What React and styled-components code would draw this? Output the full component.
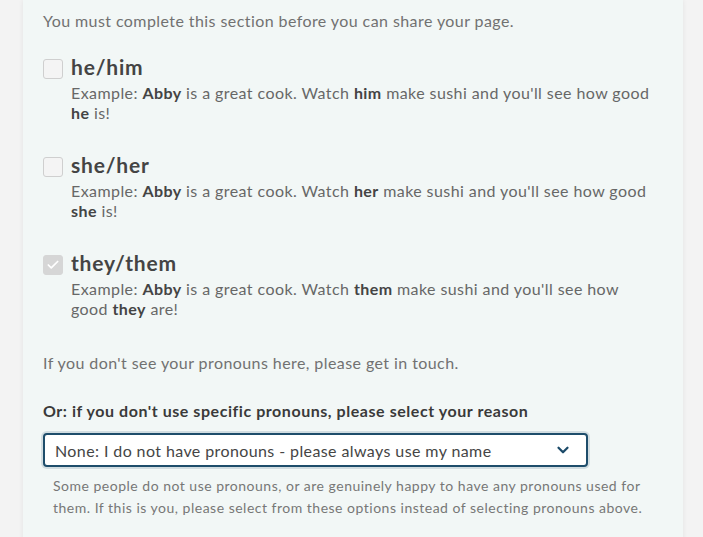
import React from 'react';
import styled, { createGlobalStyle } from 'styled-components';
import { ChevronDown, Check } from 'lucide-react';

const GlobalStyle = createGlobalStyle`
body{
  margin:0;
  background:#f3f3f3;
  font-family:Lato, "Liberation Sans", sans-serif;
}
`

const Panel = styled.section`
width:660px;
margin-left:23px;
box-sizing:border-box;
background:#f2f7f6;
box-shadow:0 0 5px rgba(0,0,0,0.07);
padding:10px 20px 40px;
min-height:537px;
`

const Intro = styled.p`
margin:0;
font-size:16px;
line-height:22px;
letter-spacing:0.42px;
color:#717171;
`

const Options = styled.div`
margin-top:22px;
display:flex;
flex-direction:column;
gap:29px;
`

const Option = styled.label`
display:flex;
gap:8px;
`

const Box = styled.span`
flex:none;
width:20px;
height:20px;
margin-top:5px;
box-sizing:border-box;
border-radius:3px;
border:1px solid ${p => p.checked ? '#d6d6d6' : '#cfcfcf'};
background:${p => p.checked ? '#d6d6d6' : '#f4f4f4'};
display:flex;
align-items:center;
justify-content:center;
color:#fff;
`

const Body = styled.div`
flex:1;
max-width:584px;
`

const Title = styled.div`
font-size:21px;
line-height:26px;
font-weight:700;
letter-spacing:0.8px;
color:#444;
`

const Example = styled.div`
margin-top:3px;
font-size:16px;
line-height:20px;
letter-spacing:0.42px;
color:#676767;
b{
  color:#444;
  font-weight:700;
}
`

const Note = styled.p`
margin:33px 0 0;
font-size:16px;
line-height:22px;
letter-spacing:0.42px;
color:#717171;
`

const FieldLabel = styled.div`
margin-top:26px;
font-size:16px;
line-height:22px;
font-weight:700;
letter-spacing:0.55px;
color:#3a3a3a;
`

const SelectBox = styled.div`
margin-top:11px;
width:545px;
height:34px;
box-sizing:border-box;
border:2px solid #1e4d6b;
border-radius:4px;
background:#fff;
box-shadow:0 0 0 2px rgba(30,77,107,0.15);
display:flex;
align-items:center;
justify-content:space-between;
padding:0 14px 0 10px;
font-size:16px;
letter-spacing:0.4px;
color:#454545;
svg{
  color:#1b4a69;
}
`

const Help = styled.p`
margin:8px 0 0;
padding:0 10px;
font-size:14px;
line-height:22px;
letter-spacing:0.5px;
color:#777;
`

const pronouns = [
  {title:'he/him', obj:'him', subj:'he', verb:'is', checked:false},
  {title:'she/her', obj:'her', subj:'she', verb:'is', checked:false},
  {title:'they/them', obj:'them', subj:'they', verb:'are', checked:true},
]

const App = () => {
  return (
    <>
      <GlobalStyle />
      <Panel>
        <Intro>You must complete this section before you can share your page.</Intro>
        <Options>
          {pronouns.map(p => (
            <Option key={p.title}>
              <Box checked={p.checked}>
                {p.checked && <Check size={14} strokeWidth={3} />}
              </Box>
              <Body>
                <Title>{p.title}</Title>
                <Example>
                  Example: <b>Abby</b> is a great cook. Watch <b>{p.obj}</b> make sushi and you'll see how good <b>{p.subj}</b> {p.verb}!
                </Example>
              </Body>
            </Option>
          ))}
        </Options>
        <Note>If you don't see your pronouns here, please get in touch.</Note>
        <FieldLabel>Or: if you don't use specific pronouns, please select your reason</FieldLabel>
        <SelectBox>
          <span>None: I do not have pronouns - please always use my name</span>
          <ChevronDown size={18} strokeWidth={3} />
        </SelectBox>
        <Help>Some people do not use pronouns, or are genuinely happy to have any pronouns used for them. If this is you, please select from these options instead of selecting pronouns above.</Help>
      </Panel>
    </>
  )
}

export default App;
